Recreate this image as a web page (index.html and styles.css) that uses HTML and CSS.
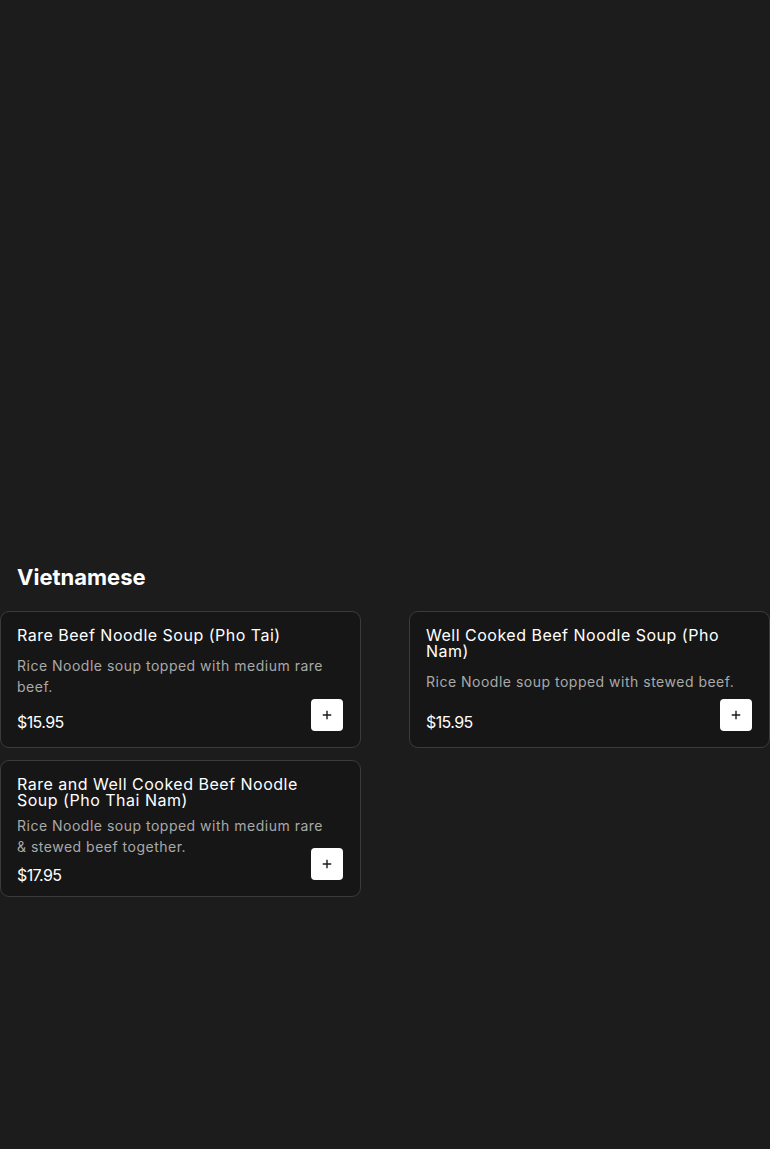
FILE: index.html
```html
<!DOCTYPE html>
<html lang="en">
<head>
<meta charset="utf-8">
<link rel="stylesheet" href="styles.css">
</head>
<body>
<main class="menu">
  <h2 class="section-title">Vietnamese</h2>
  <div class="grid">
    <article class="card">
      <h3 class="card-title">Rare Beef Noodle Soup (Pho Tai)</h3>
      <p class="card-desc">Rice Noodle soup topped with medium rare beef.</p>
      <div class="card-price">$15.95</div>
      <button class="add-btn" aria-label="Add"><svg width="12" height="12" viewBox="0 0 12 12"><path d="M6 1.75v8.5M1.75 6h8.5" stroke="#1b1b1b" stroke-width="1.4" fill="none"/></svg></button>
    </article>
    <article class="card">
      <h3 class="card-title">Well Cooked Beef Noodle Soup (Pho Nam)</h3>
      <p class="card-desc">Rice Noodle soup topped with stewed beef.</p>
      <div class="card-price">$15.95</div>
      <button class="add-btn" aria-label="Add"><svg width="12" height="12" viewBox="0 0 12 12"><path d="M6 1.75v8.5M1.75 6h8.5" stroke="#1b1b1b" stroke-width="1.4" fill="none"/></svg></button>
    </article>
    <article class="card card--long">
      <h3 class="card-title">Rare and Well Cooked Beef Noodle Soup (Pho Thai Nam)</h3>
      <p class="card-desc">Rice Noodle soup topped with medium rare &amp; stewed beef together.</p>
      <div class="card-price">$17.95</div>
      <button class="add-btn" aria-label="Add"><svg width="12" height="12" viewBox="0 0 12 12"><path d="M6 1.75v8.5M1.75 6h8.5" stroke="#1b1b1b" stroke-width="1.4" fill="none"/></svg></button>
    </article>
  </div>
</main>
</body>
</html>
```
FILE: styles.css
```css
html, body {
  margin: 0;
  padding: 0;
  background: #1c1c1c;
  color: #fff;
  font-family: Inter, "DejaVu Sans", sans-serif;
}
.menu {
  padding-top: 555px;
  min-height: 1149px;
  box-sizing: border-box;
}
.section-title {
  margin: 0;
  padding: 8px 17px 20px;
  font-size: 22px;
  font-weight: 700;
  line-height: 28px;
}
.grid {
  display: grid;
  grid-template-columns: 361px 361px;
  column-gap: 48px;
  row-gap: 12px;
  grid-auto-rows: 137px;
}
.card {
  position: relative;
  display: flex;
  flex-direction: column;
  box-sizing: border-box;
  background: #161616;
  border: 1px solid #3b3b3b;
  border-radius: 9px;
  padding: 15px 16px 13px;
}
.card-title {
  margin: 0;
  padding-right: 24px;
  font-size: 16px;
  font-weight: 400;
  line-height: 16px;
  letter-spacing: 0.5px;
}
.card-desc {
  margin: 12px 0 0;
  padding-right: 10px;
  font-size: 14px;
  line-height: 21px;
  letter-spacing: 0.5px;
  color: #a9a9a9;
}
.card-price {
  margin-top: auto;
  font-size: 16px;
  line-height: 24px;
  letter-spacing: -0.6px;
}
.card--long .card-desc { margin-top: 7px; }
.card--long .card-price { margin-top: 6px; }
.add-btn {
  position: absolute;
  right: 17px;
  bottom: 16px;
  width: 32px;
  height: 32px;
  border: 0;
  border-radius: 4px;
  background: #fff;
  display: flex;
  align-items: center;
  justify-content: center;
  padding: 0;
}
```
